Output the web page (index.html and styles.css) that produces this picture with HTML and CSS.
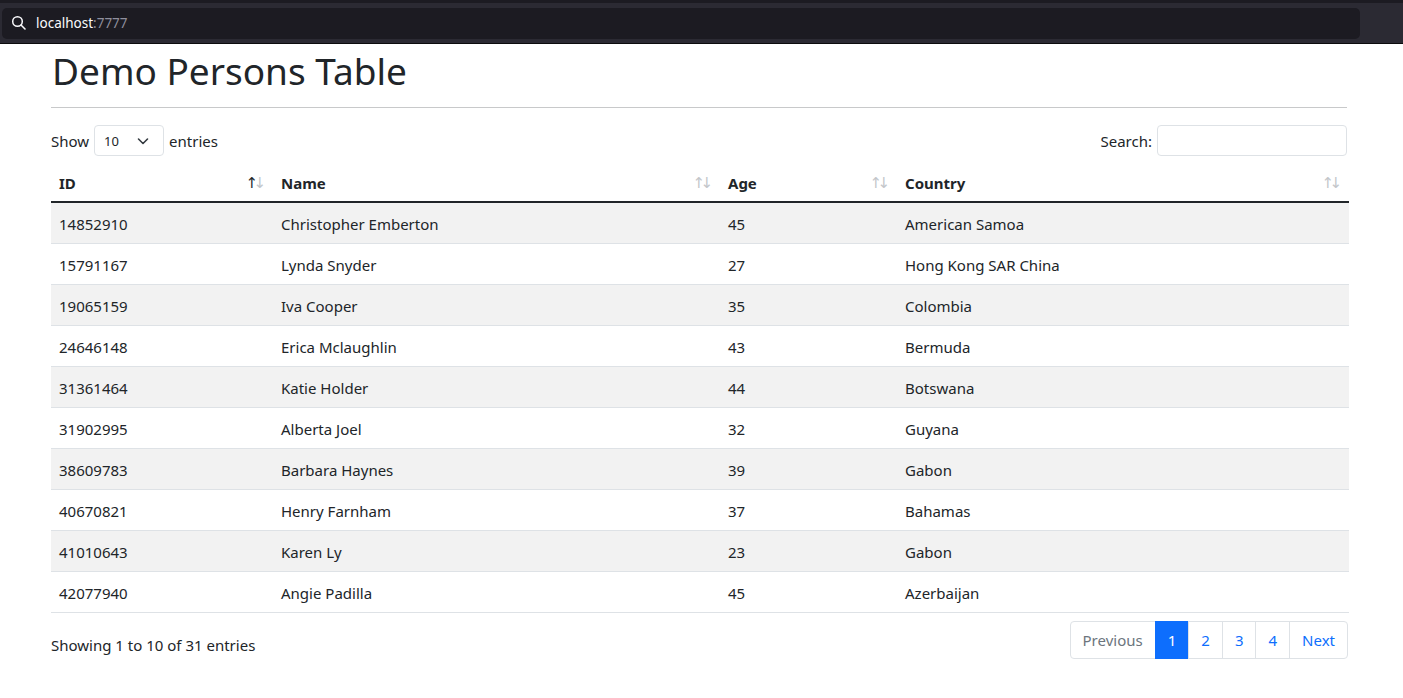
FILE: index.html
```html
<!DOCTYPE html>
<html lang="en">
<head>
    <meta charset="UTF-8">
    <meta name="viewport" content="width=device-width, initial-scale=1.0">
    <title>Demo Persons Table</title>
    <link rel="stylesheet" href="styles.css">
</head>
<body>
    <div class="browser-bar">
        <div class="address">
            <svg class="search-icon" width="16" height="16" viewBox="0 0 16 16">
                <circle cx="6.5" cy="6.5" r="4.8" fill="none" stroke="#fbfbfe" stroke-width="1.5"/>
                <line x1="10" y1="10" x2="14" y2="14" stroke="#fbfbfe" stroke-width="1.6" stroke-linecap="round"/>
            </svg>
            <span class="host">localhost</span><span class="port">:7777</span>
        </div>
    </div>

    <div class="container">
        <h1>Demo Persons Table</h1>
        <hr>

        <div class="controls">
            <label class="length">
                Show
                <span class="select">10
                    <svg width="16" height="16" viewBox="0 0 16 16">
                        <path d="M3.5 6l4.5 4.5L12.5 6" fill="none" stroke="#343a40" stroke-width="1.6" stroke-linecap="round" stroke-linejoin="round"/>
                    </svg>
                </span>
                entries
            </label>
            <label class="filter">
                Search:
                <input type="search">
            </label>
        </div>

        <table class="persons">
            <colgroup>
                <col class="col-id">
                <col class="col-name">
                <col class="col-age">
                <col class="col-country">
            </colgroup>
            <thead>
                <tr>
                    <th class="sorting asc">ID</th>
                    <th class="sorting">Name</th>
                    <th class="sorting">Age</th>
                    <th class="sorting">Country</th>
                </tr>
            </thead>
            <tbody>
                <tr><td>14852910</td><td>Christopher Emberton</td><td>45</td><td>American Samoa</td></tr>
                <tr><td>15791167</td><td>Lynda Snyder</td><td>27</td><td>Hong Kong SAR China</td></tr>
                <tr><td>19065159</td><td>Iva Cooper</td><td>35</td><td>Colombia</td></tr>
                <tr><td>24646148</td><td>Erica Mclaughlin</td><td>43</td><td>Bermuda</td></tr>
                <tr><td>31361464</td><td>Katie Holder</td><td>44</td><td>Botswana</td></tr>
                <tr><td>31902995</td><td>Alberta Joel</td><td>32</td><td>Guyana</td></tr>
                <tr><td>38609783</td><td>Barbara Haynes</td><td>39</td><td>Gabon</td></tr>
                <tr><td>40670821</td><td>Henry Farnham</td><td>37</td><td>Bahamas</td></tr>
                <tr><td>41010643</td><td>Karen Ly</td><td>23</td><td>Gabon</td></tr>
                <tr><td>42077940</td><td>Angie Padilla</td><td>45</td><td>Azerbaijan</td></tr>
            </tbody>
        </table>

        <div class="footer">
            <div class="info">Showing 1 to 10 of 31 entries</div>
            <ul class="pagination">
                <li class="page disabled">Previous</li>
                <li class="page active">1</li>
                <li class="page">2</li>
                <li class="page">3</li>
                <li class="page">4</li>
                <li class="page">Next</li>
            </ul>
        </div>
    </div>
</body>
</html>
```

FILE: styles.css
```css
body {
    margin: 0;
    font-family: "Noto Sans", sans-serif;
    font-size: 15px;
    line-height: 24px;
    color: #212529;
    background: #fff;
}
.browser-bar {
    height: 40px;
    background: #2b2a33;
    border-top: 3px solid #1c1b22;
    border-bottom: 1px solid #0c0c0d;
    padding: 0 43px 0 2px;
    display: flex;
    align-items: center;
}
.address {
    flex: 1;
    height: 31px;
    background: #1c1b22;
    border-radius: 5px;
    display: flex;
    align-items: center;
    padding-left: 9px;
    font-size: 13.5px;
}
.search-icon {
    margin-right: 9px;
}
.host {
    color: #fbfbfe;
}
.port {
    color: #8f8f9d;
}
.container {
    width: 1296px;
    margin-left: 51px;
}
h1 {
    font-size: 37px;
    font-weight: 400;
    line-height: 48px;
    margin: 0;
    padding: 3px 0 0 1px;
}
hr {
    margin: 12px 0 17px;
    border: 0;
    border-top: 1px solid #c8c9ca;
}
.controls {
    display: flex;
    justify-content: space-between;
    align-items: center;
}
.length, .filter {
    display: flex;
    align-items: center;
    gap: 5px;
}
.select {
    width: 70px;
    height: 31px;
    box-sizing: border-box;
    border: 1px solid #dee2e6;
    border-radius: 4px;
    padding: 0 12px 0 9px;
    font-size: 13px;
    display: flex;
    align-items: center;
    justify-content: space-between;
}
.filter input {
    width: 190px;
    height: 31px;
    box-sizing: border-box;
    border: 1px solid #dee2e6;
    border-radius: 4px;
    margin: 0;
}
.persons {
    width: 1298px;
    border-collapse: collapse;
    table-layout: fixed;
    margin-top: 7px;
}
.col-id { width: 222px; }
.col-name { width: 447px; }
.col-age { width: 177px; }
.col-country { width: 452px; }
th, td {
    padding: 8px;
    text-align: left;
}
th {
    position: relative;
    font-weight: 700;
    padding-top: 8px;
    padding-bottom: 6px;
    border-bottom: 2px solid #212529;
}
td {
    border-bottom: 1px solid #dee2e6;
    padding-top: 9px;
    padding-bottom: 7px;
}
tbody tr:nth-child(odd) td {
    background: #f2f2f2;
}
.sorting::before,
.sorting::after {
    position: absolute;
    top: 8px;
    font-family: "DejaVu Sans", sans-serif;
    font-weight: 400;
    font-size: 15px;
    line-height: 24px;
    color: #c3c6ca;
}
.sorting::before {
    content: "\2191";
    right: 15px;
}
.sorting::after {
    content: "\2193";
    right: 7px;
}
.sorting.asc::before {
    color: #212529;
}
.footer {
    display: flex;
    justify-content: space-between;
    align-items: flex-start;
    margin-top: 8px;
}
.info {
    padding-top: 12px;
}
.pagination {
    display: flex;
    list-style: none;
    margin: 0 -1px 0 0;
    padding: 0;
}
.page {
    padding: 6px 12px;
    border: 1px solid #dee2e6;
    margin-left: -1px;
    color: #0d6efd;
    line-height: 24px;
}
.page:first-child {
    border-radius: 4px 0 0 4px;
}
.page:last-child {
    border-radius: 0 4px 4px 0;
}
.page.disabled {
    color: #6c757d;
}
.page.active {
    background: #0d6efd;
    border-color: #0d6efd;
    color: #fff;
}
```
